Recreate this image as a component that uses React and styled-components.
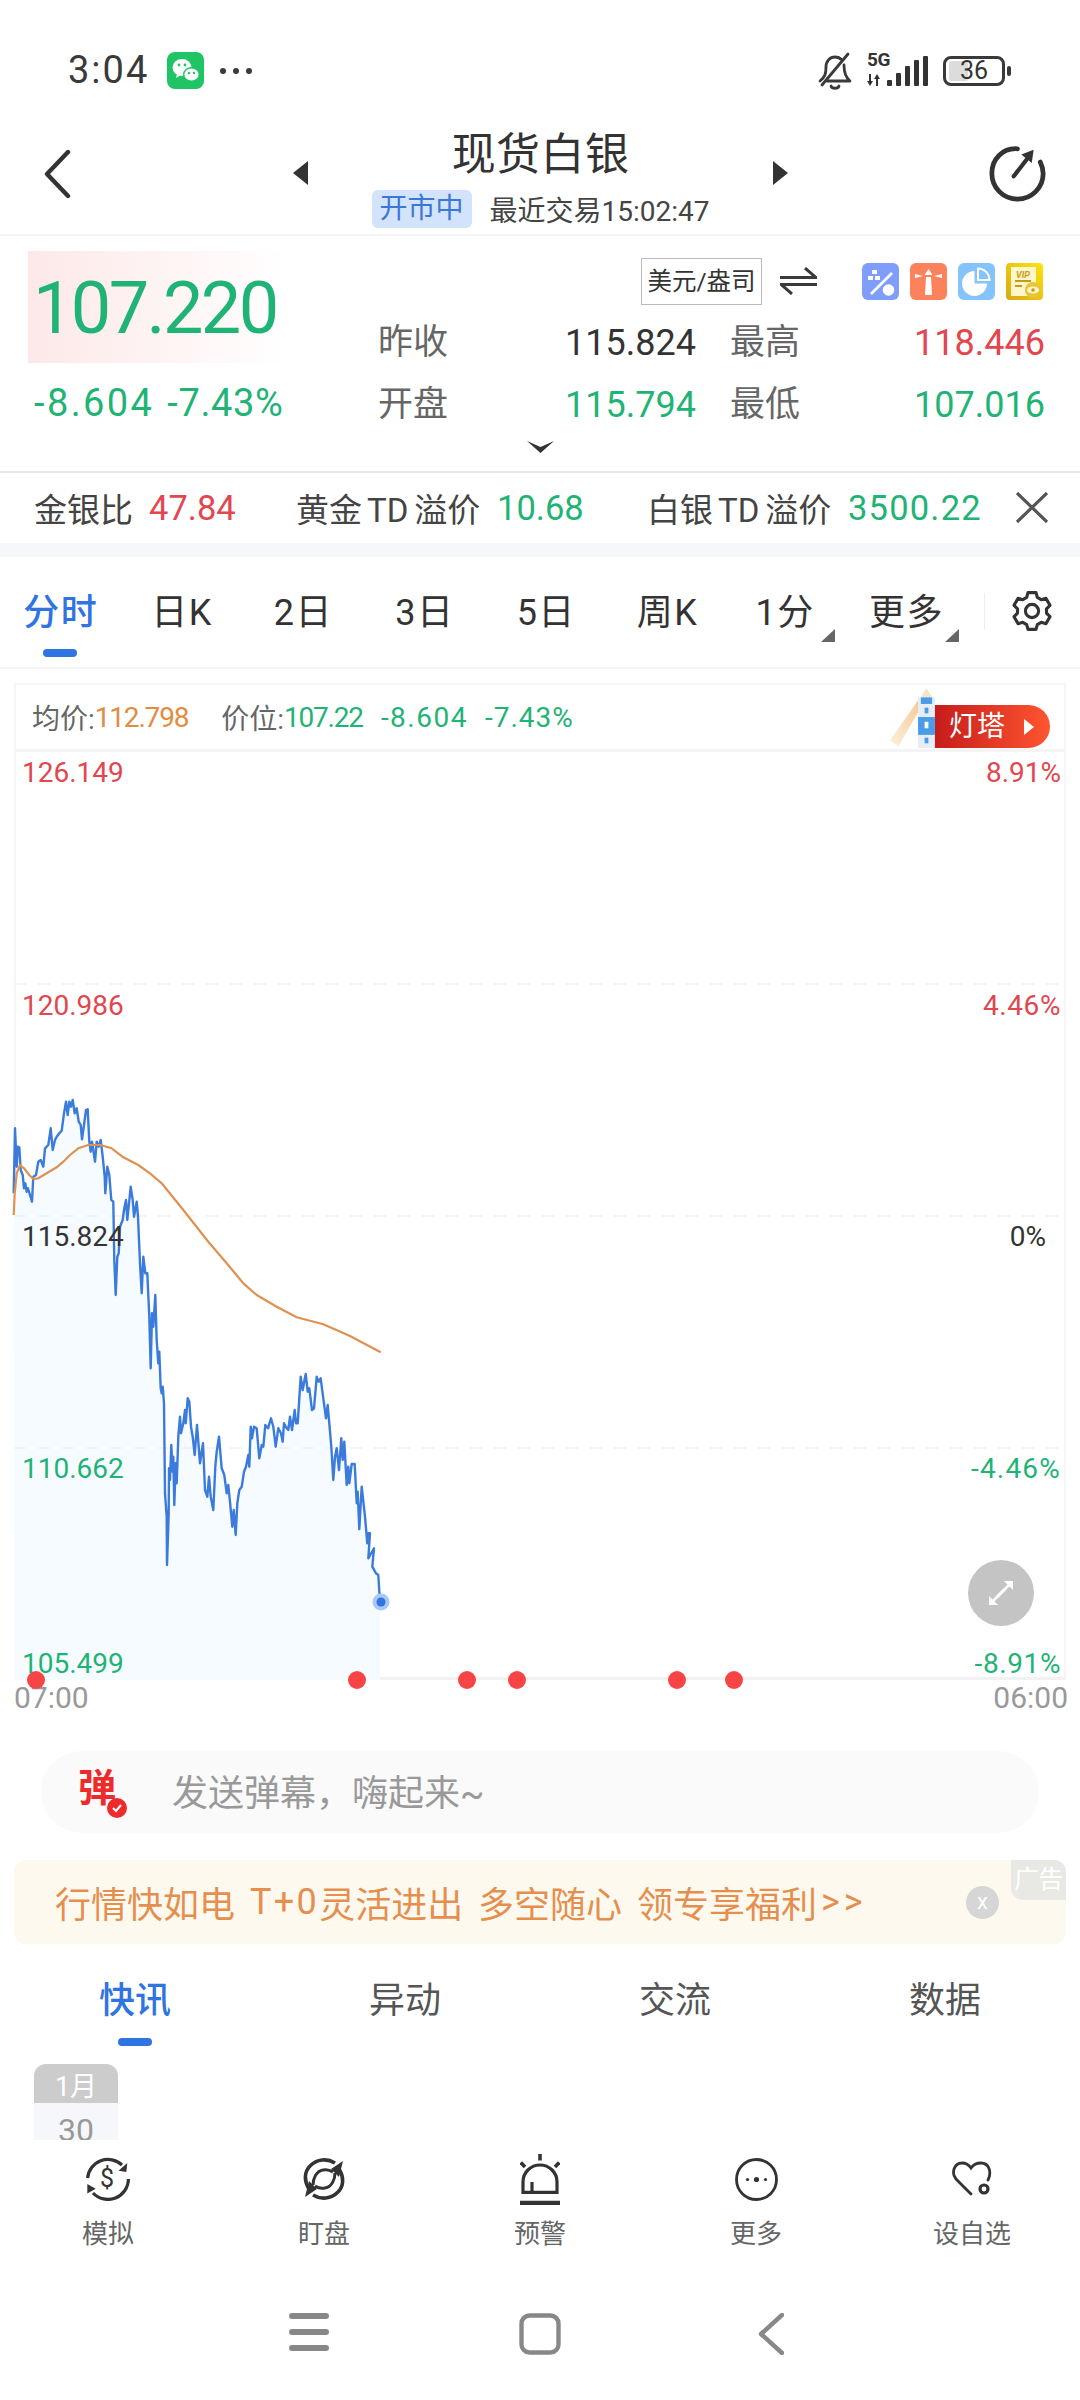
import React from 'react';
import styled, { createGlobalStyle } from 'styled-components';

const Global = createGlobalStyle`
  html, body { margin: 0; padding: 0; background: #fff; }
  body { font-family: Roboto, "Noto Sans CJK SC", sans-serif; color: #333; }
  * { box-sizing: border-box; }
`;

const GREEN = '#1fb376';
const RED = '#e2464e';
const BLUE = '#2f74e0';

const Page = styled.div`
  width: 1080px; height: 2400px; overflow: hidden; display: flex; flex-direction: column; background: #fff;
`;

/* status bar */
const StatusBar = styled.div`
  height: 125px; padding: 52px 75px 0 68px; display: flex; justify-content: space-between; align-items: flex-start;
`;
const StatusGroup = styled.div`
  display: flex; align-items: center; height: 37px; gap: ${p => p.$gap || 0}px;
`;
const Clock = styled.span`
  font-size: 38px; line-height: 37px; color: #3a3a3a; width: 99px; letter-spacing: 2px;
`;
const Dots = styled.span`
  display: flex; gap: 7px; margin-left: 16px;
`;
const Dot = styled.i`
  width: 6px; height: 6px; border-radius: 50%; background: #3a3a3a;
`;
const NetWrap = styled.div`
  position: relative; width: 62px; height: 37px;
`;
const FiveG = styled.span`
  position: absolute; left: 0; top: -1px; font-size: 19px; line-height: 18px; font-weight: 700; color: #333; letter-spacing: -.3px;
`;
const Battery = styled.div`
  position: relative; width: 62px; height: 30px; border: 3px solid #3a3a3a; border-radius: 8px; display: flex; align-items: center; justify-content: center;
  font-size: 25px; color: #333;
  &::before { content: ''; position: absolute; left: 3px; top: 2px; bottom: 2px; width: 19px; background: #dcdcdc; border-radius: 2px; }
  &::after { content: ''; position: absolute; right: -9px; top: 7px; width: 4px; height: 10px; background: #3a3a3a; border-radius: 2px; }
`;
const BatteryText = styled.span` position: relative; line-height: 1; `;

/* nav header */
const NavHeader = styled.div`
  height: 111px; display: grid; grid-template-columns: 293px 495px 1fr; border-bottom: 2px solid #f4f4f4;
`;
const BackCell = styled.div` padding: 24px 0 0 43px; `;
const ActionCell = styled.div` padding: 20px 0 0 201px; `;
const NavCenter = styled.div` display: flex; flex-direction: column; align-items: center; position: relative; `;
const TitleRow = styled.div`
  width: 100%; display: flex; justify-content: space-between; height: 64px; align-items: flex-start;
`;
const Title = styled.div` font-size: 44px; line-height: 50px; color: #333; margin-top: 5px; letter-spacing: .4px; `;
const Arrow = styled.i`
  width: 0; height: 0; margin-top: 36px; border-top: 12.5px solid transparent; border-bottom: 12.5px solid transparent;
  ${p => p.$left ? 'border-right: 15px solid #333;' : 'border-left: 15px solid #333;'}
`;
const SubRow = styled.div` display: flex; align-items: center; gap: 18px; white-space: nowrap; `;
const OpenBadge = styled.span`
  width: 100px; height: 38px; background: #d3e3fb; color: #3a78d8; border-radius: 6px; font-size: 28px; line-height: 38px; text-align: center;
`;
const TradeTime = styled.span` font-size: 28px; color: #444; `;

/* quote */
const Quote = styled.div`
  height: 237px; border-bottom: 2px solid #e8e8e8; display: flex; position: relative;
`;
const QuoteLeft = styled.div` width: 381px; padding: 15px 0 0 28px; `;
const PriceBox = styled.div`
  width: 262px; height: 112px; background: linear-gradient(90deg, #fde8e8, #fff); padding-left: 5px;
  font-size: 72px; line-height: 116px; color: ${GREEN}; letter-spacing: -2.6px;
`;
const ChangeRow = styled.div`
  display: flex; gap: 13px; padding: 18px 0 0 6px; font-size: 38px; line-height: 44px; color: ${GREEN}; white-space: nowrap;
`;
const ChangeValue = styled.span` letter-spacing: ${p => p.$ls}px; `;
const QuoteRight = styled.div` width: 664px; `;
const UnitRow = styled.div` height: 69px; padding-top: 22px; display: flex; align-items: flex-start; `;
const UnitBox = styled.div`
  margin-left: 260px; width: 121px; height: 47px; border: 1px solid #bbb; font-size: 24.5px; line-height: 45px; text-align: center; color: #333; white-space: nowrap;
`;
const SwapCell = styled.div` margin: 9px 45px 0 18px; `;
const QuickIcons = styled.div` display: flex; gap: 11px; margin-top: 5px; `;
const StatGrid = styled.div`
  display: grid; grid-template-columns: 103px 215px 34px 100px 215px; grid-auto-rows: 62px; margin: 7px 0 0 -3px;
`;
const StatLabel = styled.span`
  font-size: 35px; line-height: 62px; color: #666; grid-column: ${p => p.$col};
`;
const StatValue = styled.span`
  font-size: 36px; line-height: 62px; text-align: right; color: ${p => p.$c}; grid-column: ${p => p.$col};
`;
const ChevronRow = styled.div`
  position: absolute; left: 527px; top: 202px;
`;

/* ratio strip */
const Ratio = styled.div`
  height: 70px; display: flex; align-items: center; padding-left: 34px; font-size: 33px; color: #444;
`;
const RatioLabel = styled.span` display: inline-block; width: ${p => p.$w}px; white-space: nowrap; `;
const TdMark = styled.span` margin: 0 6px 0 5px; `;
const RatioValue = styled.span`
  display: inline-block; width: ${p => p.$w}px; color: ${p => p.$c}; font-size: 34.5px; letter-spacing: ${p => p.$ls || 0}px;
`;
const CloseX = styled.div` height: 32px; `;
const Band = styled.div` height: 14px; background: #f5f7fb; `;

/* chart tabs */
const TabBar = styled.div`
  height: 112px; border-bottom: 2px solid #f4f4f4; display: flex; position: relative;
`;
const ChartTab = styled.div`
  width: 121.4px; padding-top: 34px; text-align: center; font-size: 36px; line-height: 44px; white-space: nowrap; letter-spacing: 1.5px;
  color: ${p => p.$active ? BLUE : '#333'}; font-weight: ${p => p.$active ? 500 : 400}; position: relative;
  padding-right: ${p => p.$caret ? 8 : 0}px;
  ${p => p.$active ? `&::after { content: ''; position: absolute; left: 43px; top: 92px; width: 34px; height: 8px; border-radius: 4px; background: ${BLUE}; }` : ''}
  ${p => p.$caret ? `&::before { content: ''; position: absolute; right: ${p.$tri}px; top: 72px; width: 0; height: 0; border-left: 14px solid transparent; border-bottom: 13px solid #666; }` : ''}
`;
const GearCell = styled.div`
  margin-left: 10px; padding: 32px 0 0 29px; height: 74px;
  position: relative;
  &::before { content: ''; position: absolute; left: 3px; top: 36px; width: 1px; height: 37px; background: #eee; }
`;

/* chart */
const ChartFrame = styled.div`
  margin: 14px 14px 0; width: 1052px; height: 997px; border-top: 2px solid #f6f6f6;
  border-left: 2px solid #f6f6f6; border-right: 2px solid #f6f6f6; border-bottom: 3px solid #f2f2f2; position: relative;
`;
const ChartHeader = styled.div`
  height: 67px; border-bottom: 3px solid #f4f4f4; display: flex; align-items: center; padding: 0 0 0 16px; font-size: 28px; color: #666; position: relative;
`;
const HeadLabel = styled.span` white-space: nowrap; margin-left: ${p => p.$ml || 0}px; color: ${p => p.$c || '#666'}; letter-spacing: ${p => p.$ls || 0}px; `;
const TowerBadge = styled.div`
  position: absolute; left: 918px; top: 20px; width: 116px; height: 43px; border-radius: 0 22px 22px 0;
  background: linear-gradient(90deg, #c51c1c, #ff5530); color: #fff; font-size: 28px; line-height: 43px; padding-left: 15px;
  display: flex; align-items: center;
`;
const BadgeArrow = styled.i`
  margin-left: 19px; width: 0; height: 0; border-top: 8px solid transparent; border-bottom: 8px solid transparent; border-left: 10px solid #fff;
`;
const TowerArt = styled.div` position: absolute; left: 855px; top: 3px; `;
const Plot = styled.div` position: relative; height: 928px; `;
const PlotSvg = styled.svg` position: absolute; left: -2px; top: 0; width: 1052px; height: 950px; overflow: visible; `;
const AxisLabel = styled.span`
  position: absolute; font-size: 28px; line-height: 32px; color: ${p => p.$c}; top: ${p => p.$y}px;
  ${p => p.$right ? `right: ${p.$right}px;` : 'left: 6px;'} letter-spacing: ${p => p.$ls || 0}px;
`;
const ExpandBtn = styled.div`
  position: absolute; left: 952px; top: 808px; width: 66px; height: 66px; border-radius: 50%; background: #c4c4c4; display: flex; align-items: center; justify-content: center;
`;
const TimeRow = styled.div`
  margin: 3px 12px 0 14px; height: 30px; display: flex; justify-content: space-between; font-size: 30px; line-height: 30px; color: #999;
`;

/* danmu + ad */
const Danmu = styled.div`
  margin: 38px 41px 0; height: 82px; border-radius: 41px; background: #fafafa; display: flex; align-items: center; padding-left: 37px; position: relative;
`;
const DanmuGlyph = styled.span`
  font-size: 38px; font-weight: 700; color: #ee2a2a; width: 38px; line-height: 38px; margin-top: -8px;
`;
const DanmuCheck = styled.i`
  position: absolute; left: 66px; top: 47px; width: 20px; height: 20px; border-radius: 50%; background: #ee2a2a; display: flex; align-items: center; justify-content: center;
`;
const DanmuText = styled.span` margin: -4px 0 0 56px; font-size: 36px; color: #999; `;
const AdBanner = styled.div`
  margin: 27px 14px 0; height: 84px; border-radius: 12px; background: #fef9ef; display: flex; align-items: center; padding-left: 41px;
  font-size: 36px; color: #e58f4f; position: relative; white-space: pre; word-spacing: -1.5px;
`;
const AdWide = styled.span` letter-spacing: ${p => p.$ls}px; margin-left: ${p => p.$ml || 0}px; `;
const AdClose = styled.i`
  position: absolute; left: 952px; top: 26px; width: 33px; height: 33px; border-radius: 50%; background: #d6d6d6; color: #fff;
  font-style: normal; font-size: 22px; line-height: 31px; text-align: center;
`;
const AdTag = styled.span`
  position: absolute; right: 0; top: 0; width: 55px; height: 40px; background: #e8e8e4; border-radius: 0 12px 0 12px; color: #fff; font-size: 25px; line-height: 40px; text-align: center; white-space: nowrap; letter-spacing: -.5px;
`;

/* news tabs */
const NewsTabs = styled.div` height: 120px; display: grid; grid-template-columns: repeat(4, 270px); `;
const NewsTab = styled.div`
  padding-top: 34px; text-align: center; font-size: 36px; line-height: 46px; color: ${p => p.$active ? BLUE : '#555'}; position: relative; font-weight: ${p => p.$active ? 500 : 400};
  ${p => p.$active ? `&::after { content: ''; position: absolute; left: 118px; top: 94px; width: 34px; height: 8px; border-radius: 4px; background: ${BLUE}; }` : ''}
`;
const NewsList = styled.div` height: 76px; overflow: hidden; padding-left: 34px; `;
const DateCard = styled.div` width: 84px; border-radius: 12px 12px 0 0; overflow: hidden; text-align: center; `;
const DateMonth = styled.div` height: 39px; background: #ccc; color: #fff; font-size: 27px; line-height: 47px; `;
const DateDay = styled.div` height: 60px; background: #f6f7fb; color: #999; font-size: 32px; line-height: 54px; `;

/* toolbar */
const Toolbar = styled.div`
  height: 127px; display: grid; grid-template-columns: repeat(5, 216px); border-radius: 0 0 8px 8px; background: #fff;
`;
const ToolItem = styled.div` display: flex; flex-direction: column; align-items: center; padding-top: 12px; `;
const ToolIconBox = styled.div` height: 54px; display: flex; align-items: center; justify-content: center; `;
const ToolLabel = styled.span` margin-top: 13px; font-size: 26px; line-height: 30px; color: #666; `;

const SystemNav = styled.div`
  flex: 1; display: flex; padding-top: 46px; align-items: flex-start; padding-left: 289px;
`;
const NavCell = styled.div` width: ${p => p.$w}px; `;

/* chart data, traced from the reference */
const seg1 = [[41,400],[45,205],[50,320],[53,260],[58,262],[62,330],[68,345],[72,385],[76,370],[80,395],[84,385],[90,405],[96,425],[100,350],[108,345],[115,305],[122,300],[130,320],[135,265],[145,255],[152,205],[158,270],[165,240],[170,230],[178,220],[185,212],[192,160],[198,125],[203,165],[208,125],[213,140],[218,120],[224,160],[230,145],[236,185],[242,195],[246,238],[252,195],[258,150],[263,148],[268,245],[272,275],[276,245],[280,270],[285,305],[290,245],[296,260],[302,240],[308,290],[314,350],[316,400],[322,320],[328,345],[334,420],[340,425],[343,600],[347,705],[352,590],[356,580],[360,500],[368,480],[372,450],[378,420],[382,480],[392,380],[398,420],[402,470],[410,425],[414,470],[420,610],[425,700],[430,590],[436,640],[442,640],[448,770],[452,925],[456,760],[460,800],[466,705]];
const seg2 = [[110,0],[115,70],[118,35],[122,145],[125,160],[128,140],[132,190],[135,460],[140,530],[141,675],[146,520],[147,385],[150,420],[154,315],[158,395],[160,350],[163,495],[167,370],[170,430],[175,290],[180,230],[183,280],[190,250],[195,210],[197,250],[203,175],[208,185],[213,260],[218,290],[224,345],[231,255],[236,320],[240,370],[249,310],[255,450],[262,470],[267,410],[272,470],[280,510],[286,380],[290,335],[297,290],[305,385],[313,405],[320,460],[325,435],[330,485],[337,560],[341,510],[347,585],[352,490],[358,450],[365,440],[372,395],[378,380],[385,345],[388,380],[392,260],[396,295],[402,260],[410,265],[418,355],[425,315],[430,320],[436,255],[444,265],[453,235],[460,260],[467,320],[475,265],[483,280],[488,305],[492,250],[500,265],[505,270],[510,230],[516,270],[524,210],[528,250],[533,250],[542,110],[548,150],[557,102],[563,155],[568,145],[576,210],[582,205],[590,110],[596,125],[602,115],[610,175],[618,235],[623,195],[628,250],[634,320],[640,420],[645,350],[650,325],[657,390],[664,295],[668,360],[673,305],[680,435],[685,380],[688,430],[695,372],[704,372],[710,490],[713,455],[718,568],[725,440],[735,530],[742,610],[745,580],[750,580],[745,655],[762,625],[757,680],[768,700],[775,705]];
const avgRaw = [[41,465],[44,400],[50,340],[60,315],[72,325],[88,345],[100,357],[115,355],[140,340],[170,322],[190,305],[210,285],[235,265],[265,255],[300,255],[335,265],[370,292],[415,315],[450,340],[485,370],[550,450],[625,545],[680,610],[730,670],[770,705],[830,740],[890,772],[970,793],[1050,828],[1142,877]];

const X0 = 14, Y0 = 752;
const fromZoom4 = ([u, v]) => [u / 3 - X0, 1060 + v / 3 - Y0];
const fromZoom5 = ([u, v]) => [120 + u / 3 - X0, 1340 + v / 3 - Y0];
const fmt = pts => pts.map(p => `${p[0].toFixed(1)},${p[1].toFixed(1)}`).join(' ');
const priceLine = [...seg1.map(fromZoom4), ...seg2.map(fromZoom5), [380 - X0, 1602 - Y0]];
const avgLine = avgRaw.map(fromZoom4);
const fillPts = [...priceLine, [priceLine[priceLine.length - 1][0], 928], [0, 928]];
const gridYs = [232, 464, 696];
const eventXs = [36, 357, 467, 517, 677, 734];

const PriceChart = () => (
  <PlotSvg viewBox="0 0 1052 950">
    <polygon points={fmt(fillPts)} fill="#f6fbff" />
    {gridYs.map(y => <line key={y} x1="0" x2="1052" y1={y} y2={y} stroke="#f1f1f1" strokeWidth="1.5" strokeDasharray="12 12" />)}
    <polyline points={fmt(priceLine)} fill="none" stroke="#3b7bdc" strokeWidth="2.4" strokeLinejoin="round" />
    <polyline points={fmt(avgLine)} fill="none" stroke="#df9150" strokeWidth="2.2" strokeLinejoin="round" />
    <circle cx={381 - X0} cy={850} r="8.5" fill="#a9c8f5" />
    <circle cx={381 - X0} cy={850} r="4.5" fill="#2f74e0" />
    {eventXs.map(x => <circle key={x} cx={x - X0} cy={928} r="9" fill="#f74545" />)}
  </PlotSvg>
);

/* icons */
const WeChat = () => (
  <svg width="37" height="37" viewBox="0 0 37 37">
    <rect width="37" height="37" rx="8" fill="#1fc565" />
    <ellipse cx="15" cy="15.5" rx="9.5" ry="8.5" fill="#fff" />
    <path d="M10 22 l-1 4 5-3z" fill="#fff" />
    <ellipse cx="24.5" cy="22.5" rx="7.8" ry="6.8" fill="#fff" stroke="#1fc565" strokeWidth="1.4" />
    <circle cx="12" cy="13" r="1.4" fill="#1fc565" /><circle cx="18" cy="13" r="1.4" fill="#1fc565" />
    <circle cx="22" cy="21" r="1.2" fill="#1fc565" /><circle cx="27" cy="21" r="1.2" fill="#1fc565" />
  </svg>
);
const BellOff = () => (
  <svg width="36" height="38" viewBox="0 0 36 38" fill="none" stroke="#3a3a3a" strokeWidth="2.8" strokeLinecap="round" strokeLinejoin="round">
    <path d="M3 29 C8 25 9 22 9 15 C9 9 13 5 18 5 C20 5 23 6 25 8" />
    <path d="M27 13 C27 20 28 25 33 29 H10" />
    <path d="M31 2 L5 33" />
    <path d="M14 34 C15 37 21 37 22 34" />
  </svg>
);
const Net = () => (
  <NetWrap>
    <FiveG>5G</FiveG>
    <svg width="62" height="37" viewBox="0 0 62 37" fill="#333">
      <path d="M2 22 v7 l-2 0 3 5 3-5 -2 0 v-7z M9 34 v-7 l-2 0 3-5 3 5 -2 0 v7z" />
      <rect x="20" y="28" width="5" height="6" rx="1" /><rect x="29" y="21" width="5" height="13" rx="1" />
      <rect x="38" y="14" width="5" height="20" rx="1" /><rect x="47" y="8" width="5" height="26" rx="1" />
      <rect x="56" y="4" width="5" height="30" rx="1" />
    </svg>
  </NetWrap>
);
const BackIcon = () => (
  <svg width="30" height="50" viewBox="0 0 30 50" fill="none" stroke="#333" strokeWidth="4.4" strokeLinecap="round" strokeLinejoin="round">
    <path d="M25 3 L4 25 L25 47" />
  </svg>
);
const ShareIcon = () => (
  <svg width="57" height="57" viewBox="0 0 60 60" fill="none" stroke="#333" strokeWidth="5" strokeLinecap="round">
    <path d="M30 4 C14 3 3 15 3 30 C3 45 15 57 30 57 C45 57 57 45 57 30 C57 26 56 22 54 18" />
    <path d="M26 33 L42 12" strokeWidth="4.4" />
    <path d="M34 10 L47 5 L45 19 Z" fill="#333" stroke="none" />
  </svg>
);
const Swap = () => (
  <svg width="37" height="28" viewBox="0 0 37 28" fill="none" stroke="#3a3a3a" strokeWidth="3">
    <path d="M0 10.5 H36 L25 1" /><path d="M37 17.5 H1 L12 27" />
  </svg>
);
const PercentIcon = () => (
  <svg width="37" height="37" viewBox="0 0 37 37">
    <rect width="37" height="37" rx="6" fill="#7f9dfa" />
    <path d="M9 31 L30 10" stroke="#fff" strokeWidth="2.6" />
    <circle cx="26.5" cy="27" r="5.8" fill="#fff" />
    <rect x="10" y="7" width="5" height="4" fill="#fff" /><rect x="6" y="13" width="5" height="4" fill="#fff" /><rect x="13" y="13" width="5" height="4" fill="#fff" />
  </svg>
);
const LighthouseIcon = () => (
  <svg width="37" height="37" viewBox="0 0 37 37">
    <rect width="37" height="37" rx="6" fill="#fc825c" />
    <path d="M15 32 L16 14 H21 L22 32Z M14.5 12 L18.5 6 L22.5 12Z" fill="#fff" />
    <path d="M5 11 L13 13 L5 15Z M32 11 L24 13 L32 15Z" fill="#fff" />
  </svg>
);
const PieIcon = () => (
  <svg width="37" height="37" viewBox="0 0 37 37">
    <rect width="37" height="37" rx="6" fill="#84c3fb" />
    <path d="M16.5 8 V20.5 H29 A12.5 12.5 0 1 1 16.5 8Z" fill="#fff" />
    <path d="M20 5.5 A11.5 11.5 0 0 1 31.5 17 H20Z" fill="none" stroke="#fff" strokeWidth="2" />
  </svg>
);
const VipIcon = () => (
  <svg width="37" height="37" viewBox="0 0 37 37">
    <defs><linearGradient id="vipg" x1="0" y1="1" x2="1" y2="0"><stop offset="0" stopColor="#d9a712" /><stop offset="1" stopColor="#fde40c" /></linearGradient></defs>
    <rect width="37" height="37" rx="4" fill="url(#vipg)" />
    <rect x="5" y="4" width="25" height="29" fill="#fff6c9" />
    <text x="10" y="15" fontSize="9" fontWeight="700" fontStyle="italic" fill="#c99a17" fontFamily="Roboto">VIP</text>
    <path d="M9 18 H25 M9 23 H16" stroke="#c99a17" strokeWidth="1.8" />
    <circle cx="27" cy="27" r="8" fill="#e8c538" /><ellipse cx="27" cy="27" rx="6" ry="3.6" fill="#fff6c9" /><circle cx="27" cy="27" r="1.8" fill="#c99a17" />
  </svg>
);
const ChevronDown = () => (
  <svg width="27" height="12" viewBox="0 0 27 12" fill="#333"><path d="M0 0 L13.5 6 L27 0 L13.5 12Z" /></svg>
);
const XIcon = () => (
  <svg width="32" height="31" viewBox="0 0 32 31" fill="none" stroke="#555" strokeWidth="3.2"><path d="M1 1 L31 30 M31 1 L1 30" /></svg>
);
const Gear = () => (
  <svg width="44" height="44" viewBox="0 0 24 24" fill="none" stroke="#333" strokeWidth="1.7" strokeLinejoin="round">
    <path d="M9.8 2 H14.2 L14.9 4.6 L17 5.8 L19.6 5.1 L21.8 8.9 L19.9 10.8 V13.2 L21.8 15.1 L19.6 18.9 L17 18.2 L14.9 19.4 L14.2 22 H9.8 L9.1 19.4 L7 18.2 L4.4 18.9 L2.2 15.1 L4.1 13.2 V10.8 L2.2 8.9 L4.4 5.1 L7 5.8 L9.1 4.6 Z" />
    <circle cx="12" cy="12" r="3.6" />
  </svg>
);
const TowerIcon = () => (
  <svg width="66" height="60" viewBox="0 0 70 64">
    <defs><linearGradient id="beam" x1="1" y1="0" x2="0" y2="1"><stop offset="0" stopColor="#f6c994" /><stop offset="1" stopColor="#fdf0dd" /></linearGradient></defs>
    <path d="M50 13 L20 56 L29 62 L52 22Z" fill="url(#beam)" />
    <rect x="50" y="10" width="18" height="54" fill="#e6edf5" />
    <path d="M59 0 L53 10 H65Z" fill="#f4e4c8" />
    <rect x="53" y="10" width="12" height="7" fill="#4a9be8" />
    <rect x="50" y="31" width="18" height="19" fill="#4a9be8" />
    <rect x="57" y="36" width="4" height="7" fill="#fff" />
    <rect x="57" y="21" width="4" height="6" fill="#4a9be8" /><rect x="57" y="53" width="4" height="6" fill="#4a9be8" />
  </svg>
);
const ExpandIcon = () => (
  <svg width="32" height="32" viewBox="0 0 32 32" fill="none" stroke="#fff" strokeWidth="2.6">
    <path d="M12 20 L26 6" /><path d="M19 4 H28 V13 Z" fill="#fff" stroke="none" /><path d="M20 12 L6 26" /><path d="M13 28 H4 V19 Z" fill="#fff" stroke="none" />
  </svg>
);
const CheckMark = () => (
  <svg width="14" height="14" viewBox="0 0 14 14" fill="none" stroke="#fff" strokeWidth="2"><path d="M3 7 L6 10 L11 4" /></svg>
);
const SimIcon = () => (
  <svg width="44" height="44" viewBox="0 0 44 44" fill="none" stroke="#333" strokeWidth="3.2">
    <path d="M1.6 21 A20.5 20.5 0 0 1 36 8" />
    <path d="M42.4 22 A20.5 20.5 0 0 1 7 36" />
    <path d="M40.3 15 L32.5 13.7 L41.3 6Z" fill="#333" stroke="none" />
    <path d="M1.3 27 L9.7 31.7 L1.3 36.5Z" fill="#333" stroke="none" />
    <text x="21" y="30" textAnchor="middle" fontSize="25" fill="#333" stroke="none" fontFamily="Roboto">$</text>
  </svg>
);
const WatchIcon = () => (
  <svg width="42" height="44" viewBox="0 0 42 44" fill="none" stroke="#333" strokeWidth="3.6">
    <path d="M6 32 C1 24 1 15 7 9 C14 2 24 1 32 6" />
    <path d="M36 12 C41 20 41 29 35 35 C28 42 18 43 10 38" />
    <path d="M2 40 L6 24 L14 32Z" fill="#333" stroke="none" />
    <path d="M40 4 L36 20 L28 12Z" fill="#333" stroke="none" />
    <path d="M10 28 C10 22 13 14 20 13 C24 12 27 13 30 15" strokeWidth="3" />
    <path d="M32 16 C32 22 29 30 22 31 C18 32 15 31 12 29" strokeWidth="3" />
  </svg>
);
const AlarmIcon = () => (
  <svg width="40" height="51" viewBox="0 0 40 51" fill="none" stroke="#333" strokeWidth="3.2">
    <path d="M20 0 V6.5" strokeWidth="3.6" /><path d="M0.8 8.5 L5 13" strokeWidth="3.6" /><path d="M39.2 8.5 L35 13" strokeWidth="3.6" />
    <path d="M3 38.4 V28 C3 18 11 11 20 11 C29 11 37 18 37 28 V38.4 Z" />
    <path d="M12 38 V28" />
    <path d="M0 49 H40" strokeWidth="4.4" />
  </svg>
);
const MoreIcon = () => (
  <svg width="43" height="43" viewBox="0 0 43 43" fill="none" stroke="#333" strokeWidth="2.8">
    <circle cx="21.5" cy="21.5" r="20" />
    <circle cx="12.5" cy="21.5" r="1.6" fill="#333" stroke="none" /><circle cx="21.5" cy="21.5" r="2.6" fill="#333" stroke="none" /><circle cx="30.5" cy="21.5" r="1.6" fill="#333" stroke="none" />
  </svg>
);
const HeartIcon = () => (
  <svg width="40" height="36" viewBox="0 0 40 36" fill="none" stroke="#333" strokeWidth="2.8" strokeLinecap="round">
    <path d="M19 33 L4 18 C-1 12 2 2 10 2 C14 2 17 4 19 7 C21 4 25 2 29 2 C37 2 40 11 36 19" />
    <circle cx="32" cy="28" r="4" strokeWidth="3.2" />
  </svg>
);
const MenuIcon = () => (
  <svg width="40" height="38" viewBox="0 0 40 38" fill="#888">
    <rect y="0" width="40" height="6" rx="3" /><rect y="16" width="40" height="6" rx="3" /><rect y="32" width="40" height="6" rx="3" />
  </svg>
);
const HomeIcon = () => (
  <svg width="42" height="42" viewBox="0 0 42 42" fill="none" stroke="#888" strokeWidth="4.4"><rect x="2.5" y="2.5" width="37" height="37" rx="8" /></svg>
);
const NavBackIcon = () => (
  <svg width="26" height="42" viewBox="0 0 26 42" fill="none" stroke="#888" strokeWidth="4.4" strokeLinejoin="round" strokeLinecap="round"><path d="M24 2 L3 21 L24 40" /></svg>
);

const chartTabs = [
  { t: '分时', active: true }, { t: '日K' }, { t: '2日' }, { t: '3日' }, { t: '5日' }, { t: '周K' },
  { t: '1分', caret: true, tri: 15 }, { t: '更多', caret: true, tri: 12 },
];
const axis = [
  { t: '126.149', y: 5, c: RED }, { t: '120.986', y: 238, c: RED }, { t: '115.824', y: 469, c: '#333' },
  { t: '110.662', y: 701, c: GREEN }, { t: '105.499', y: 896, c: GREEN },
  { t: '8.91%', y: 5, c: RED, r: 3 }, { t: '4.46%', y: 238, c: RED, r: 3, ls: .6 }, { t: '0%', y: 469, c: '#333', r: 18 },
  { t: '-4.46%', y: 701, c: GREEN, r: 3, ls: 1.2 }, { t: '-8.91%', y: 896, c: GREEN, r: 3, ls: .6 },
];
const tools = [
  { t: '模拟', I: SimIcon }, { t: '盯盘', I: WatchIcon }, { t: '预警', I: AlarmIcon }, { t: '更多', I: MoreIcon }, { t: '设自选', I: HeartIcon },
];

export default function App() {
  return (
    <Page>
      <Global />
      <StatusBar>
        <StatusGroup>
          <Clock>3:04</Clock>
          <WeChat />
          <Dots><Dot /><Dot /><Dot /></Dots>
        </StatusGroup>
        <StatusGroup $gap={14}>
          <BellOff />
          <Net />
          <Battery><BatteryText>36</BatteryText></Battery>
        </StatusGroup>
      </StatusBar>
      <NavHeader>
        <BackCell><BackIcon /></BackCell>
        <NavCenter>
          <TitleRow>
            <Arrow $left />
            <Title>现货白银</Title>
            <Arrow />
          </TitleRow>
          <SubRow>
            <OpenBadge>开市中</OpenBadge>
            <TradeTime>最近交易15:02:47</TradeTime>
          </SubRow>
        </NavCenter>
        <ActionCell><ShareIcon /></ActionCell>
      </NavHeader>
      <Quote>
        <QuoteLeft>
          <PriceBox>107.220</PriceBox>
          <ChangeRow><ChangeValue $ls={2.4}>-8.604</ChangeValue><ChangeValue $ls={.6}>-7.43%</ChangeValue></ChangeRow>
        </QuoteLeft>
        <QuoteRight>
          <UnitRow>
            <UnitBox>美元/盎司</UnitBox>
            <SwapCell><Swap /></SwapCell>
            <QuickIcons><PercentIcon /><LighthouseIcon /><PieIcon /><VipIcon /></QuickIcons>
          </UnitRow>
          <StatGrid>
            <StatLabel $col={1}>昨收</StatLabel><StatValue $col={2} $c="#333">115.824</StatValue>
            <StatLabel $col={4}>最高</StatLabel><StatValue $col={5} $c={RED}>118.446</StatValue>
            <StatLabel $col={1}>开盘</StatLabel><StatValue $col={2} $c={GREEN}>115.794</StatValue>
            <StatLabel $col={4}>最低</StatLabel><StatValue $col={5} $c={GREEN}>107.016</StatValue>
          </StatGrid>
        </QuoteRight>
        <ChevronRow><ChevronDown /></ChevronRow>
      </Quote>
      <Ratio>
        <RatioLabel $w={115}>金银比</RatioLabel><RatioValue $w={147} $c={RED}>47.84</RatioValue>
        <RatioLabel $w={201}>黄金<TdMark>TD</TdMark>溢价</RatioLabel><RatioValue $w={150} $c={GREEN}>10.68</RatioValue>
        <RatioLabel $w={201}>白银<TdMark>TD</TdMark>溢价</RatioLabel><RatioValue $w={168} $c={GREEN} $ls={1.2}>3500.22</RatioValue>
        <CloseX><XIcon /></CloseX>
      </Ratio>
      <Band />
      <TabBar>
        {chartTabs.map(x => <ChartTab key={x.t} $active={x.active} $caret={x.caret} $tri={x.tri}>{x.t}</ChartTab>)}
        <GearCell><Gear /></GearCell>
      </TabBar>
      <ChartFrame>
        <ChartHeader>
          <HeadLabel>均价:</HeadLabel><HeadLabel $c="#e38b3f" $ls={-1.2}>112.798</HeadLabel>
          <HeadLabel $ml={33}>价位:</HeadLabel><HeadLabel $c={GREEN} $ls={-1.2}>107.22</HeadLabel>
          <HeadLabel $ml={18} $c={GREEN} $ls={1.5}>-8.604</HeadLabel>
          <HeadLabel $ml={17} $c={GREEN} $ls={1}>-7.43%</HeadLabel>
          <TowerBadge>灯塔<BadgeArrow /></TowerBadge>
          <TowerArt><TowerIcon /></TowerArt>
        </ChartHeader>
        <Plot>
          <PriceChart />
          {axis.map(a => <AxisLabel key={a.t} $y={a.y} $c={a.c} $right={a.r} $ls={a.ls}>{a.t}</AxisLabel>)}
          <ExpandBtn><ExpandIcon /></ExpandBtn>
        </Plot>
      </ChartFrame>
      <TimeRow><span>07:00</span><span>06:00</span></TimeRow>
      <Danmu>
        <DanmuGlyph>弹</DanmuGlyph>
        <DanmuCheck><CheckMark /></DanmuCheck>
        <DanmuText>发送弹幕，嗨起来~</DanmuText>
      </Danmu>
      <AdBanner>
        行情快如电  <AdWide $ls={2.4}>T+0</AdWide>灵活进出  多空随心  领专享福利<AdWide $ls={4} $ml={4}>&gt;&gt;</AdWide>
        <AdClose>x</AdClose>
        <AdTag>广告</AdTag>
      </AdBanner>
      <NewsTabs>
        <NewsTab $active>快讯</NewsTab><NewsTab>异动</NewsTab><NewsTab>交流</NewsTab><NewsTab>数据</NewsTab>
      </NewsTabs>
      <NewsList>
        <DateCard><DateMonth>1月</DateMonth><DateDay>30</DateDay></DateCard>
      </NewsList>
      <Toolbar>
        {tools.map(({ t, I }) => <ToolItem key={t}><ToolIconBox><I /></ToolIconBox><ToolLabel>{t}</ToolLabel></ToolItem>)}
      </Toolbar>
      <SystemNav>
        <NavCell $w={230}><MenuIcon /></NavCell>
        <NavCell $w={239}><HomeIcon /></NavCell>
        <NavCell $w={30}><NavBackIcon /></NavCell>
      </SystemNav>
    </Page>
  );
}
